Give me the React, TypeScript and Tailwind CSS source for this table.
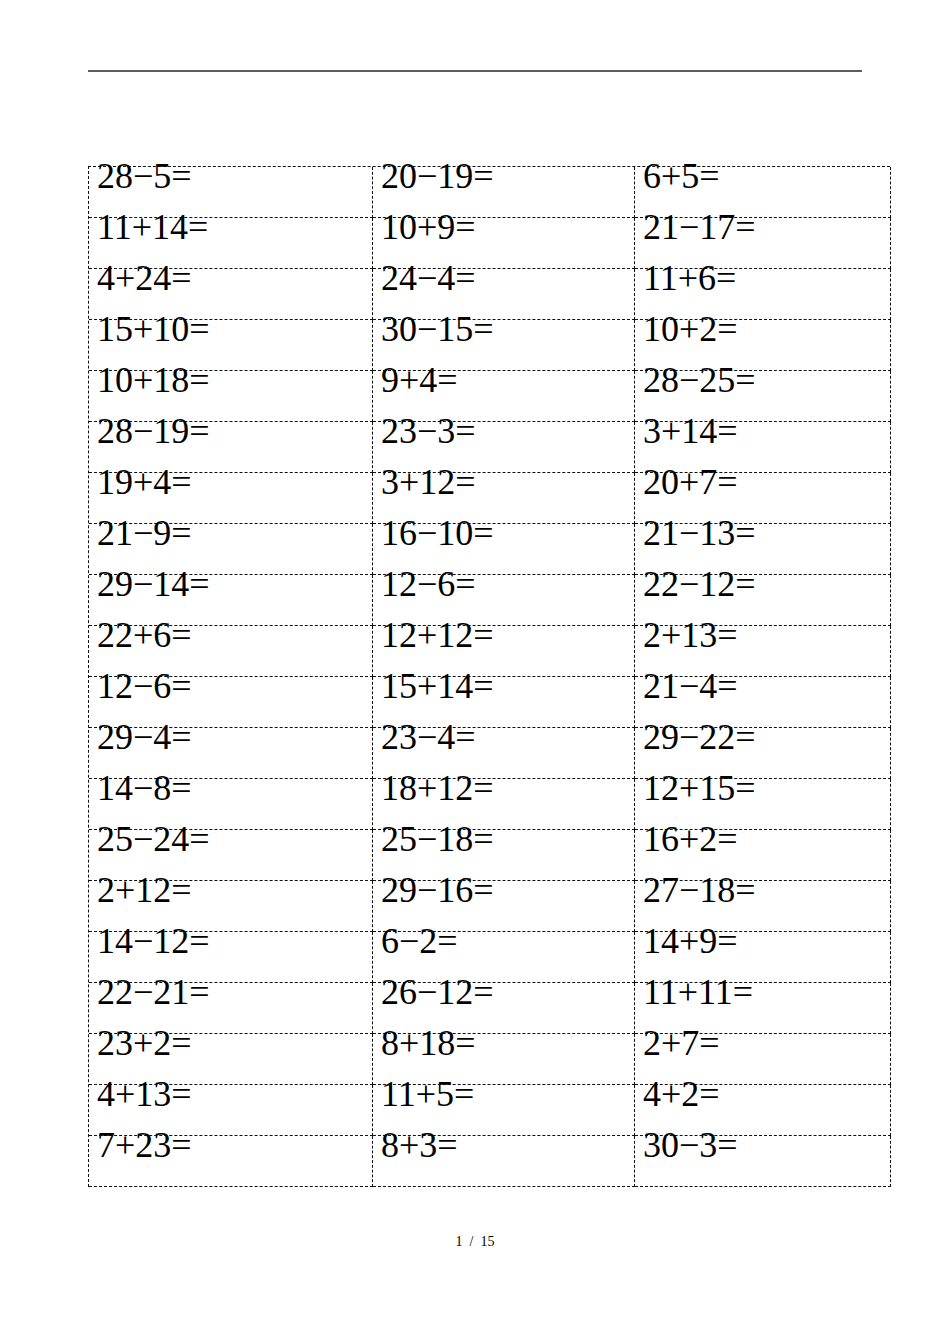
import { Fragment } from "react";

const COL1 = ["28−5=", "11+14=", "4+24=", "15+10=", "10+18=", "28−19=", "19+4=", "21−9=", "29−14=", "22+6=", "12−6=", "29−4=", "14−8=", "25−24=", "2+12=", "14−12=", "22−21=", "23+2=", "4+13=", "7+23="];
const COL2 = ["20−19=", "10+9=", "24−4=", "30−15=", "9+4=", "23−3=", "3+12=", "16−10=", "12−6=", "12+12=", "15+14=", "23−4=", "18+12=", "25−18=", "29−16=", "6−2=", "26−12=", "8+18=", "11+5=", "8+3="];
const COL3 = ["6+5=", "21−17=", "11+6=", "10+2=", "28−25=", "3+14=", "20+7=", "21−13=", "22−12=", "2+13=", "21−4=", "29−22=", "12+15=", "16+2=", "27−18=", "14+9=", "11+11=", "2+7=", "4+2=", "30−3="];

function Cell({ text }: { text: string }) {
  return (
    <div className="h-[51px] border-r border-b border-dashed border-[#111] pl-[8px] text-[36px] leading-[18px] text-black whitespace-nowrap">
      {text}
    </div>
  );
}

export default function App() {
  return (
    <div className="w-[950px] h-[1344px] bg-white font-['Liberation_Serif',serif] overflow-hidden">
      <div className="pt-[70px] pl-[88px]">
        <div className="w-[774px] h-[2px] bg-[#5c5c5c]" />
      </div>

      <div className="ml-[88px] mt-[94px] w-[802px] grid grid-cols-[284px_262px_256px] border-l border-t border-dashed border-[#111]">
        {COL1.map((a, i) => (
          <Fragment key={i}>
            <Cell text={a} />
            <Cell text={COL2[i]} />
            <Cell text={COL3[i]} />
          </Fragment>
        ))}
      </div>

      <div className="mt-[47px] text-center text-[14px] leading-[16px] text-black">
        1&nbsp;&nbsp;/&nbsp;&nbsp;15
      </div>
    </div>
  );
}
